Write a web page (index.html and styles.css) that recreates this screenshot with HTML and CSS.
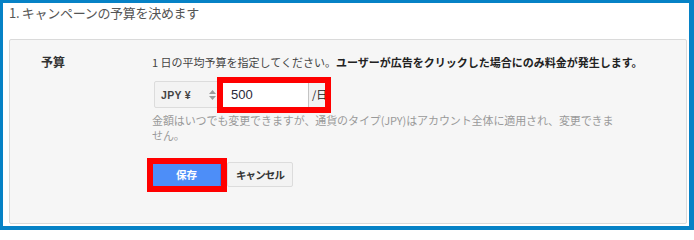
FILE: index.html
```html
<!DOCTYPE html>
<html lang="ja">
<head>
<meta charset="utf-8">
<link rel="stylesheet" href="styles.css">
</head>
<body>
<div class="frame">
  <div class="title">1. キャンペーンの予算を決めます</div>
  <div class="panel">
    <div class="label">予算</div>
    <div class="content">
      <div class="desc">1 日の平均予算を指定してください。<b>ユーザーが広告をクリックした場合にのみ料金が発生します。</b></div>
      <div class="budget-row">
        <div class="select">
          <span class="select-text">JPY ¥</span>
          <svg class="arrows" width="7" height="10" viewBox="0 0 7 10"><path d="M3.5 0 L7 4 H0 Z M0 6 H7 L3.5 10 Z" fill="#9a9a9a"/></svg>
        </div>
        <div class="input-group">
          <div class="input">500</div>
          <div class="suffix">/日</div>
          <div class="mark mark-input"></div>
        </div>
      </div>
      <p class="help">金額はいつでも変更できますが、通貨のタイプ(JPY)はアカウント全体に適用され、変更できません。</p>
      <div class="buttons">
        <div class="btn-wrap">
          <div class="btn btn-primary">保存</div>
          <div class="mark mark-btn"></div>
        </div>
        <div class="btn btn-cancel">キャンセル</div>
      </div>
    </div>
  </div>
</div>
</body>
</html>
```
FILE: styles.css
```css
* { box-sizing: border-box; }
html, body { margin: 0; padding: 0; background: #ffffff; }
body { font-family: "Noto Sans CJK JP", "Liberation Sans", sans-serif; }

.frame {
  width: 694px;
  height: 230px;
  border-style: solid;
  border-color: #0682c6;
  border-width: 3px 5px 4px 3px;
  background: #ffffff;
  display: flex;
  flex-direction: column;
  padding: 2px 2px 2px 6px;
}

.title {
  font-size: 13px;
  line-height: 16px;
  letter-spacing: -0.3px;
  color: #555555;
  height: 34px;
}

.panel {
  flex: 1;
  background: #f6f6f6;
  border: 1px solid #dadada;
  border-radius: 2px;
  display: grid;
  grid-template-columns: 111px 1fr;
  padding: 14px 46px 0 31px;
  align-content: start;
}

.label {
  font-size: 12px;
  font-weight: bold;
  line-height: 16px;
  color: #333333;
}

.content { display: flex; flex-direction: column; }

.desc {
  font-size: 11px;
  line-height: 16px;
  letter-spacing: 0;
  color: #444444;
  white-space: nowrap;
}
.desc b { color: #222222; }

.budget-row {
  display: flex;
  margin-top: 11px;
  margin-left: 2px;
  height: 27px;
}

.select {
  width: 68px;
  height: 27px;
  border: 1px solid #dcdcdc;
  border-radius: 2px;
  background: #f3f3f3;
  display: flex;
  align-items: center;
  justify-content: space-between;
  padding: 0 5px 0 6px;
}
.select-text {
  font-family: "Liberation Sans", "Noto Sans CJK JP", sans-serif;
  font-size: 10.5px;
  font-weight: bold;
  color: #444444;
  letter-spacing: 0.3px;
}

.input-group {
  position: relative;
  display: flex;
  height: 27px;
}
.input {
  width: 86px;
  height: 27px;
  background: #ffffff;
  border: 1px solid #cfcfcf;
  border-right: none;
  font-family: "Liberation Sans", sans-serif;
  font-size: 13px;
  line-height: 25px;
  color: #2a2a3a;
  padding-left: 8px;
}
.suffix {
  width: 18px;
  height: 27px;
  background: #f2f2f2;
  border: 1px solid #cfcfcf;
  border-left-color: #c4c4c4;
  font-size: 11px;
  line-height: 25px;
  color: #222222;
  padding-left: 3px;
  white-space: nowrap;
}

.mark {
  position: absolute;
  border: 6px solid #ff0000;
  pointer-events: none;
}
.mark-input { left: -5px; top: -4px; right: -5px; bottom: -5px; }

.help {
  margin: 5px 0 0 0;
  max-width: 466px;
  font-size: 11px;
  line-height: 15px;
  letter-spacing: -0.1px;
  color: #9a9a9a;
}

.buttons {
  display: flex;
  margin-top: 19px;
  gap: 6px;
}
.btn-wrap { position: relative; }
.btn {
  height: 25px;
  border-radius: 2px;
  font-size: 10.5px;
  font-weight: bold;
  display: flex;
  align-items: center;
  justify-content: center;
}
.btn-primary {
  width: 69px;
  background: #4d8ef8;
  border: 1px solid #3079ed;
  color: #ffffff;
}
.btn-cancel {
  width: 66px;
  background: #f3f3f3;
  border: 1px solid #dcdcdc;
  color: #333333;
  letter-spacing: -0.9px;
}
.mark-btn { left: -5px; top: -4px; right: -6px; bottom: -5px; }
```
